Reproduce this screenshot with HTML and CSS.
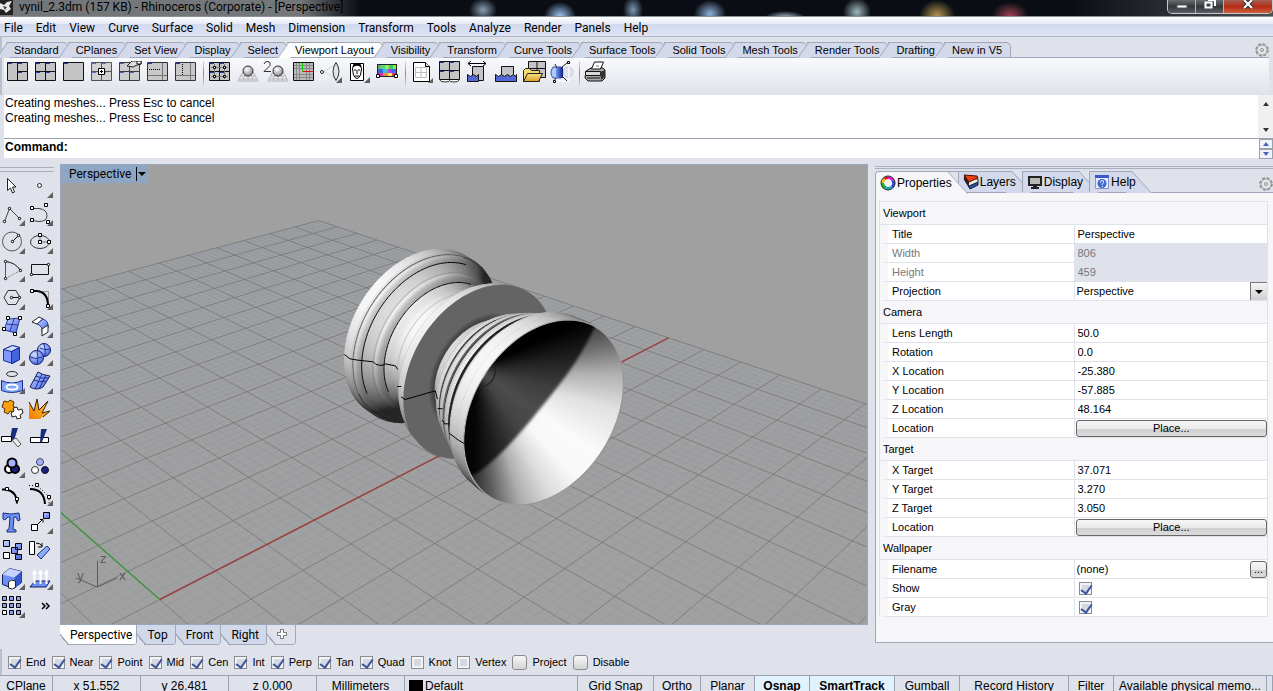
FILE: index.html
```html
<!DOCTYPE html>
<html lang="en">
<head>
    <meta charset="UTF-8">
    <meta name="viewport" content="width=device-width, initial-scale=1.0">
    <title>vynil_2.3dm (157 KB) - Rhinoceros (Corporate) - [Perspective]</title>
    <link rel="stylesheet" href="styles.css">
</head>
<body>

<!-- shared icon parts -->
<svg class="defs" aria-hidden="true">
    <defs>
        <linearGradient id="blue" x1="0" y1="0" x2="1" y2="1">
            <stop offset="0" stop-color="#c4d2ff"/><stop offset="1" stop-color="#4a68e8"/>
        </linearGradient>
        <linearGradient id="gold" x1="0" y1="0" x2="0" y2="1">
            <stop offset="0" stop-color="#f8e08a"/><stop offset="1" stop-color="#dca020"/>
        </linearGradient>
        <linearGradient id="fire" x1="1" y1="0" x2="0" y2="1">
            <stop offset="0" stop-color="#ffd23c"/><stop offset="1" stop-color="#f07800"/>
        </linearGradient>
        <linearGradient id="tube" x1="0" y1="0" x2="1" y2="0">
            <stop offset="0" stop-color="#6f9cf0"/><stop offset="1" stop-color="#0c1c80"/>
        </linearGradient>
        <radialGradient id="ball" cx=".38" cy=".32" r=".7">
            <stop offset="0" stop-color="#fff"/><stop offset="1" stop-color="#8a8a8a"/>
        </radialGradient>
        <radialGradient id="blueball" cx=".35" cy=".3" r=".8">
            <stop offset="0" stop-color="#d4e0ff"/><stop offset="1" stop-color="#3c5ce0"/>
        </radialGradient>
        <symbol id="fly" viewBox="0 0 28 28"><path d="M25 20v6h-6z" fill="#606060"/></symbol>
        <symbol id="pane4" viewBox="0 0 28 22">
            <path d="M3.500 1.500h20v18h-20z" fill="#c4c4c4" stroke="#111"/>
            <path d="M13.500 2v17M4 10.500h19" stroke="#111"/>
            <path d="M4 2.500h4M14 2.500h4M4 11.500h4M14 11.500h4" stroke="#2438a8"/>
        </symbol>
        <symbol id="plane" viewBox="0 0 28 22">
            <path d="M8 12h12l4 8H4zM5 18h18M6 15h16M11 12l-2 8M17 12l2 8M14 12v8" fill="none" stroke="#b4b6bc"/>
            <circle cx="14" cy="10" r="5" fill="url(#ball)" stroke="#333"/>
        </symbol>
        <symbol id="gear" viewBox="0 0 14 14">
            <circle cx="7" cy="7" r="6" fill="none" stroke="#8a8a8a" stroke-width="1.500" stroke-dasharray="3 1.700"/>
            <circle cx="7" cy="7" r="5" fill="#e4e6ea" stroke="#a0a0a0"/>
            <circle cx="7" cy="7" r="1.500" fill="none" stroke="#909090"/>
        </symbol>
    </defs>
</svg>

<header class="titlebar">
    <svg class="app-icon" width="13" height="15" viewBox="0 0 13 15"><path d="M0 0h13v15H0z" fill="#222"/><path d="M0 3l4 2 3-3 5-1-3 5 2 3-5 4-2-3-4-1z" fill="#e8e8e8"/><path d="M3 6l4 1-2 3z" fill="#444"/></svg>
    <span class="title">vynil_2.3dm (157 KB) - Rhinoceros (Corporate) - [Perspective]</span>
    <div class="window-buttons">
        <button aria-label="Minimize"><svg width="12" height="14"><path d="M1 5h10v3H1z" fill="#fff" stroke="#555"/></svg></button>
        <button aria-label="Restore"><svg width="12" height="14"><path d="M4 0h7v6M1.500 2.500h6v5h-6z" fill="none" stroke="#fff" stroke-width="2"/></svg></button>
        <button class="close" aria-label="Close"><svg width="12" height="14"><path d="M2 0l8 8M10 0L2 8" stroke="#333" stroke-width="4"/><path d="M2 0l8 8M10 0L2 8" stroke="#fff" stroke-width="2"/></svg></button>
    </div>
</header>

<nav class="menubar">
    <a href="#">File</a>
    <a href="#">Edit</a>
    <a href="#">View</a>
    <a href="#">Curve</a>
    <a href="#">Surface</a>
    <a href="#">Solid</a>
    <a href="#">Mesh</a>
    <a href="#">Dimension</a>
    <a href="#">Transform</a>
    <a href="#">Tools</a>
    <a href="#">Analyze</a>
    <a href="#">Render</a>
    <a href="#">Panels</a>
    <a href="#">Help</a>
</nav>

<div class="ribbon">
    <div class="ribbon-tabs">
        <button>Standard</button>
        <button>CPlanes</button>
        <button>Set View</button>
        <button>Display</button>
        <button>Select</button>
        <button class="active">Viewport Layout</button>
        <button>Visibility</button>
        <button>Transform</button>
        <button>Curve Tools</button>
        <button>Surface Tools</button>
        <button>Solid Tools</button>
        <button>Mesh Tools</button>
        <button>Render Tools</button>
        <button>Drafting</button>
        <button>New in V5</button>
        <svg class="gear" width="14" height="14"><use href="#gear"/></svg>
    </div>
    <div class="toolbar">
        <button aria-label="3 viewports"><svg viewBox="0 0 28 22"><path d="M3.500 1.500h20v18h-20z" fill="#c4c4c4" stroke="#111"/><path d="M13.500 2v17M14 10.500h9" stroke="#111"/><path d="M4 2.500h4M14 2.500h4M14 11.500h4" stroke="#2438a8"/></svg></button>
        <button aria-label="4 viewports"><svg viewBox="0 0 28 22"><use href="#pane4"/></svg></button>
        <button aria-label="Maximize viewport"><svg viewBox="0 0 28 22"><path d="M3.500 1.500h20v18h-20z" fill="#c4c4c4" stroke="#111"/><path d="M4 2.500h4" stroke="#2438a8"/></svg></button>
        <button aria-label="New viewport"><svg viewBox="0 0 28 22"><use href="#pane4" opacity=".7"/><path d="M10.500 7.500h6v6h-6z" fill="#fff" stroke="#000"/><path d="M12 10h3v1h-3zM13 9h1v3h-1z"/></svg></button>
        <button aria-label="Viewport properties"><svg viewBox="0 0 28 22"><use href="#pane4" opacity=".8"/><path d="M11 5l5-5h9v3l-4 1-4 2z" fill="#ddd" stroke="#222"/><path d="M21 0h4v3h-4z" fill="#fff" stroke="#111"/></svg></button>
        <button aria-label="Split horizontal"><svg viewBox="0 0 28 22"><path d="M3.500 1.500h20v18h-20z" fill="#c8c8c8" stroke="#333"/><path d="M18.500 2v17M4 14.500h19" stroke="#777"/><path d="M5 8.500h12" stroke="#000" stroke-dasharray="1 1"/><path d="M4 2.500h4" stroke="#2438a8"/></svg></button>
        <button aria-label="Split vertical"><svg viewBox="0 0 28 22"><path d="M3.500 1.500h20v18h-20z" fill="#c8c8c8" stroke="#333"/><path d="M18.500 2v17M4 14.500h19" stroke="#777"/><path d="M10.500 3v11" stroke="#000" stroke-dasharray="1 1"/><path d="M4 2.500h4" stroke="#2438a8"/></svg></button>
        <span class="sep"></span>
        <button aria-label="Synchronize views"><svg viewBox="0 0 28 22"><use href="#pane4"/><path d="M8.500 3v15M18.500 3v15M5 6.500h17M5 15.500h17" stroke="#777"/><path d="M7.500 5.500h2v2h-2zM17.500 5.500h2v2h-2zM7.500 14.500h2v2h-2zM17.500 14.500h2v2h-2z" fill="#eee" stroke="#000"/></svg></button>
        <button aria-label="Set CPlane"><svg viewBox="0 0 28 22"><use href="#plane"/></svg></button>
        <button aria-label="Two CPlanes"><svg viewBox="0 0 28 22"><use href="#plane" x="2"/><path d="M2 3q1-3 4-2.500t2 4L2 10.500h7" fill="none" stroke="#333"/></svg></button>
        <button aria-label="Grid"><svg viewBox="0 0 28 22"><path d="M3.500 1.500h20v18h-20z" fill="#bcbcbc" stroke="#111"/><path d="M6.500 2v17M9.500 2v17M16.500 2v17M19.500 2v17M4 4.500h19M4 7.500h19M4 13.500h19M4 16.500h19" stroke="#888"/><path d="M12.500 2v8" stroke="#0c0"/><path d="M12.500 10.500h11" stroke="#e01010"/></svg></button>
        <button aria-label="Lens"><svg viewBox="0 0 28 22"><path d="M6 10.500L18 3M6 10.500L18 18" stroke="#d8d8dc"/><circle cx="4" cy="11" r="1.500" fill="#fff" stroke="#222"/><path d="M18 1.500q-6 9 0 18q6-9 0-18z" fill="#dde4ea" stroke="#333"/><path d="M24 16v6h-6z" fill="#606060"/></svg></button>
        <button aria-label="Named view"><svg viewBox="0 0 28 22"><path d="M4.500 2.500h13v17h-13z" fill="#fff" stroke="#000"/><path d="M6.500 8q0-4 4.500-4t4.500 4l-1 6q-3.500 7-7 0z" fill="#fff" stroke="#000"/><path d="M7 6q4-4 8 0l-1-3H8zM8 9h2M12 9h2M11 9v4M9 15h4" stroke="#000"/><path d="M24 16v6h-6z" fill="#606060"/></svg></button>
        <button aria-label="Background bitmap"><svg viewBox="0 0 28 22"><path d="M3 3h20v13H3z" fill="#222"/><path d="M4 4h3v4H4z" fill="#7a6"/><path d="M7 4h4v4H7z" fill="#4d8"/><path d="M11 4h4v4h-4z" fill="#9e5"/><path d="M15 4h4v4h-4z" fill="#3c6"/><path d="M19 4h3v4h-3z" fill="#8e4"/><path d="M4 8h5v4H4z" fill="#36d"/><path d="M9 8h5v4H9z" fill="#4bd"/><path d="M14 8h4v4h-4z" fill="#a4d"/><path d="M18 8h4v4h-4z" fill="#46e"/><path d="M4 12h5v3H4z" fill="#d3a"/><path d="M9 12h5v3H9z" fill="#e84"/><path d="M14 12h4v3h-4z" fill="#ee5"/><path d="M18 12h4v3h-4z" fill="#e36"/><path d="M2.500 13.500h3v3h-3zM20.500 13.500h3v3h-3z" fill="#fff" stroke="#000"/></svg></button>
        <span class="sep"></span>
        <button aria-label="New layout"><svg viewBox="0 0 28 22"><path d="M5.500 1.500h12l4 4v15h-16z" fill="#fff" stroke="#000"/><path d="M17.500 1.500v4h4" fill="#ddd" stroke="#000"/><path d="M7.500 6.500h11v10h-11zM13 6v11M7 11.500h12" fill="none" stroke="#bbb"/><path d="M25 17v5h-5z" fill="#606060"/></svg></button>
        <button aria-label="Four view layout"><svg viewBox="0 0 28 22"><ellipse cx="9" cy="19" rx="5" ry="2" fill="#fff" stroke="#333"/><ellipse cx="18" cy="19" rx="5" ry="2" fill="#fff" stroke="#333"/><use href="#pane4" y="-1"/></svg></button>
        <button aria-label="Detail width"><svg viewBox="0 0 28 22"><path d="M4 2.500h18M7 0L4 2.500 7 5M19 0l3 2.500L19 5" stroke="#000" fill="none"/><path d="M8.500 5.500h11v14h-11z" fill="#c4c4c4" stroke="#111"/><path d="M3.500 20.500v-7l3 2 3-2 3 2 2-2v7z" fill="#5468d8" stroke="#111"/></svg></button>
        <button aria-label="Detail lock"><svg viewBox="0 0 28 22"><path d="M9.500 5.500h12v12h-12z" fill="#c4c4c4" stroke="#111"/><path d="M3.500 20.500v-7l3 2 3-2 3 2 3-2 3 2 3-2 2 2 1-2v7z" fill="#5468d8" stroke="#111"/></svg></button>
        <button aria-label="Open layout"><svg viewBox="0 0 28 22"><path d="M8.500 .5h17v16h-17z" fill="#c4c4c4" stroke="#111"/><path d="M17 1v15M9 7.500h16" stroke="#111"/><path d="M3.500 20.500v-11l2-2h4l2 2h8v11z" fill="#f4d870" stroke="#222"/><path d="M3.500 20.500l4-8h15l-4 8z" fill="url(#gold)" stroke="#222"/></svg></button>
        <button aria-label="Clipping plane"><svg viewBox="0 0 28 22"><circle cx="20" cy="11" r="5" fill="#dde2ee" stroke="#c4c8d4"/><path d="M9 2h12v18H9z" fill="none" stroke="#fff"/><path d="M5 6h8v11H5q-4-5 0-11z" fill="#a8ccff" stroke="#3850a0"/><path d="M8 6h7v11H8z" fill="url(#tube)"/><path d="M14 6l5-4M14 15l5 5M7 3l2 4M8 17l-2 3" stroke="#222"/><path d="M19.500 .5h2v2h-2zM5.500 19.500h2v2h-2z" fill="#fff" stroke="#000"/></svg></button>
        <span class="sep"></span>
        <button aria-label="Print"><svg viewBox="0 0 28 22"><path d="M4 10l5-3h12l2 2v8l-3 3H6l-3-3z" fill="#aaa" stroke="#111"/><path d="M9.500 8l3-7h9l-3 7z" fill="#fff" stroke="#111"/><path d="M3.500 10.500h15v4h-15zM5 17h13" fill="#d8d8d8" stroke="#111"/><path d="M18 11l5-2v7l-4 3z" fill="#333"/><path d="M14 5h3" stroke="#777"/></svg></button>
    </div>
</div>

<section class="command">
    <div class="history">
        <div class="history-text">Creating meshes... Press Esc to cancel<br>Creating meshes... Press Esc to cancel</div>
        <div class="scrollbar"><i class="up"></i><i class="down"></i></div>
    </div>
    <div class="prompt">
        <label for="cmd">Command:</label>
        <input id="cmd" type="text" autocomplete="off">
        <div class="spin"><button aria-label="Previous"><i class="up"></i></button><button aria-label="Next"><i class="down"></i></button></div>
    </div>
</section>

<main class="workspace">
    <aside class="tools">
        <button aria-label="Select"><svg viewBox="0 0 28 28"><path d="M7.500 6.500v12l3-2.500 2 5 2-1-2-5h3.500z" fill="#fff" stroke="#222"/></svg></button>
        <button aria-label="Point"><svg viewBox="0 0 28 28"><circle cx="11.500" cy="13.500" r="2" fill="#fff" stroke="#222"/><use href="#fly"/></svg></button>

        <button aria-label="Polyline"><svg viewBox="0 0 28 28"><path d="M4.500 21.500l5-13 10 10" fill="none" stroke="#444"/><g fill="#fff" stroke="#000"><circle cx="4.500" cy="21.500" r="1.200"/><circle cx="9.500" cy="8.500" r="1.200"/><circle cx="19.500" cy="18.500" r="1.200"/></g><use href="#fly"/></svg></button>
        <button aria-label="Curve"><svg viewBox="0 0 28 28"><path d="M4 8.500h7q8 1 8 7t-8 6q-4 0-7-2" fill="none" stroke="#444"/><path d="M2.500 6.500h3v3h-3zM16.500 3.500h3v3h-3zM2.500 18.500h3v3h-3zM18.500 20.500h3v3h-3z" fill="#fff" stroke="#000"/><use href="#fly"/></svg></button>

        <button aria-label="Circle"><svg viewBox="0 0 28 28"><circle cx="12" cy="13.500" r="9.500" fill="none" stroke="#555"/><path d="M12.500 13.500l6-6" stroke="#000"/><g fill="#fff" stroke="#000"><circle cx="12.500" cy="13.500" r="1.200"/><circle cx="18.500" cy="7.500" r="1.200"/></g><use href="#fly"/></svg></button>
        <button aria-label="Ellipse"><svg viewBox="0 0 28 28"><ellipse cx="12" cy="14" rx="9.500" ry="6.500" fill="none" stroke="#333"/><path d="M12 7v7h9" fill="none" stroke="#777"/><path d="M10.500 5.500h3v3h-3zM10.500 12.500h3v3h-3zM19.500 12.500h3v3h-3z" fill="#fff" stroke="#000"/><use href="#fly"/></svg></button>

        <button aria-label="Arc"><svg viewBox="0 0 28 28"><path d="M5.500 22V5.500" stroke="#555"/><path d="M5.500 22.500l15-8" stroke="#888" stroke-dasharray="2 1"/><path d="M5.500 5.500q10 1 15 9" fill="none" stroke="#111"/><g fill="#fff" stroke="#000"><circle cx="5.500" cy="5.500" r="1.200"/><circle cx="20.500" cy="14.500" r="1.200"/><circle cx="5.500" cy="22.500" r="1.200"/></g><use href="#fly"/></svg></button>
        <button aria-label="Rectangle"><svg viewBox="0 0 28 28"><path d="M3.500 8.500h17v10h-17z" fill="none" stroke="#111"/><g fill="#fff" stroke="#000"><circle cx="20.500" cy="8.500" r="1.200"/><circle cx="3.500" cy="18.500" r="1.200"/></g><use href="#fly"/></svg></button>

        <button aria-label="Polygon"><svg viewBox="0 0 28 28"><path d="M8 6.500h8l4 7-4 7H8l-4-7z" fill="none" stroke="#333"/><path d="M11.500 13.500h8" stroke="#000"/><g fill="#fff" stroke="#000"><circle cx="11.500" cy="13.500" r="1.200"/><circle cx="19.500" cy="13.500" r="1.200"/></g><use href="#fly"/></svg></button>
        <button aria-label="Fillet"><svg viewBox="0 0 28 28"><path d="M4 7.500h16.500v15" fill="none" stroke="#999"/><path d="M4 7h5q11 1 11 15" fill="none" stroke="#000" stroke-width="2"/><path d="M2.500 5.500h3v3h-3zM18.500 20.500h3v3h-3z" fill="#fff" stroke="#000"/><use href="#fly"/></svg></button>

        <button aria-label="Surface from points"><svg viewBox="0 0 28 28"><path d="M8 7l12-1-4 15-12-3z" fill="url(#blue)" stroke="#2438a0"/><path d="M6 12l12 1M14 7l-4 12" stroke="#2438a0"/><path d="M6.500 4.500h3v3h-3zM18.500 4.500h3v3h-3zM2.500 15.500h3v3h-3zM13.500 20.500h3v3h-3z" fill="#fff" stroke="#000"/><use href="#fly"/></svg></button>
        <button aria-label="Blend surface"><svg viewBox="0 0 28 28"><path d="M4 10l7-5 4 2-6 5z" fill="#fff" stroke="#222"/><path d="M9 12l6-5q6 2 5 9l-6 4q1-6-5-8z" fill="url(#blue)" stroke="#2438a0"/><path d="M14 17l6-4v7l-6 4z" fill="#fff" stroke="#222"/><use href="#fly"/></svg></button>

        <button aria-label="Box"><svg viewBox="0 0 28 28"><path d="M3.500 9.500l9-4 7 2v12l-7 4-9-3z" fill="#7f98ff" stroke="#1c2c90"/><path d="M3.500 9.500l9-4 7 2-8 4z" fill="#d0dcff" stroke="#1c2c90"/><path d="M11.500 11.500l8-4v12l-8 4z" fill="#4664e0" stroke="#1c2c90"/><use href="#fly"/></svg></button>
        <button aria-label="Boolean union"><svg viewBox="0 0 28 28"><circle cx="16" cy="10" r="6.500" fill="url(#blueball)" stroke="#101c60"/><circle cx="8.500" cy="17.500" r="7" fill="url(#blueball)" stroke="#101c60"/><path d="M2 17q6 3 12 0M9 11q2 6 0 13M16 4q2 6 1 12M12 8q5 3 10 1" fill="none" stroke="#2438a0"/><use href="#fly"/></svg></button>

        <button aria-label="Project curve"><svg viewBox="0 0 28 28"><ellipse cx="12" cy="6" rx="5.500" ry="2.500" fill="none" stroke="#333"/><path d="M1.500 12.500q10 5 21 0v10q-11 4-21 0z" fill="#7fa4f8" stroke="#1c2c90"/><ellipse cx="12" cy="19" rx="5.500" ry="2.500" fill="#7fa4f8" stroke="#fff" stroke-width="2"/><use href="#fly"/></svg></button>
        <button aria-label="Mesh"><svg viewBox="0 0 28 28"><path d="M10 4q4 3 12 4l-7 11q-6 4-13 0z" fill="url(#blue)" stroke="#101c60"/><path d="M6 12q5 3 12 1M14 6L7 21M18 7l-7 14M8 8q5 3 12 2" fill="none" stroke="#1c2c90"/><use href="#fly"/></svg></button>

        <button aria-label="Join"><svg viewBox="0 0 28 28"><path d="M4 5l4 1 2-2 4 2-1 4 3 2-2 4-4-1-2 3-4-2 1-3-3-2z" fill="#f8a010" stroke="#503000"/><path d="M13 12l4-1 1 3 4-1 1 4-3 2 1 3-4 1-1-3-4 1-1-4 3-2z" fill="#fff" stroke="#222"/></svg></button>
        <button aria-label="Explode"><svg viewBox="0 0 28 28"><path d="M1 6l5 9 3-12 2 11 9-9-6 12 8-2-10 8H1z" fill="url(#fire)"/><path d="M1 6l5 9 3-12 2 11 9-9-6 12 8-2-7 6" fill="none" stroke="#402000"/></svg></button>

        <button aria-label="Trim"><svg viewBox="0 0 28 28"><path d="M12 4h6l-4 12h-4z" fill="#182c80"/><path d="M1.500 12.500h10v5h-10z" fill="#fff" stroke="#000"/><path d="M12 16l4-2 5 6-3 3z" fill="#eee" stroke="#555"/></svg></button>
        <button aria-label="Split"><svg viewBox="0 0 28 28"><path d="M2.500 13.500h18v5h-18z" fill="#fff" stroke="#000"/><path d="M13 5h6l-5 13h-2z" fill="#182c80"/></svg></button>

        <button aria-label="Group"><svg viewBox="0 0 28 28"><g stroke="#000" stroke-width="2"><circle cx="9" cy="17" r="4" fill="#fff"/><circle cx="15" cy="17" r="4" fill="#182080"/><circle cx="12" cy="11" r="4.500" fill="#a8b0ff"/></g><use href="#fly"/></svg></button>
        <button aria-label="Ungroup"><svg viewBox="0 0 28 28"><circle cx="12" cy="10" r="3.500" fill="#a8b0ff" stroke="#445"/><circle cx="7" cy="18" r="3.500" fill="#fff" stroke="#333"/><circle cx="17" cy="18" r="3.500" fill="#182080" stroke="#112"/></svg></button>

        <button aria-label="Edit points"><svg viewBox="0 0 28 28"><path d="M2 9.500h4q11 2 11 14" fill="none" stroke="#000" stroke-width="2"/><path d="M5.500 7.500h3v3h-3zM15.500 17.500h3v3h-3z" fill="#fff" stroke="#000"/></svg></button>
        <button aria-label="Control points"><svg viewBox="0 0 28 28"><path d="M2 9q14 0 15 15" fill="none" stroke="#000" stroke-width="2"/><path d="M1 5.500h8l12 11v7" fill="none" stroke="#000" stroke-dasharray="1 2"/><path d="M7.500 3.500h3v3h-3zM19.500 15.500h3v3h-3z" fill="#fff" stroke="#000"/><use href="#fly"/></svg></button>

        <button aria-label="Text"><svg viewBox="0 0 28 28"><path d="M3 5q8 2 16 0l1 7-2 1-2-4h-2l-1 12 3 1v2H7v-2l2-1 1-12H8l-3 3-2-1z" fill="#6c90f4" stroke="#1c2c80"/></svg></button>
        <button aria-label="Move"><svg viewBox="0 0 28 28"><path d="M15.500 4.500h6v6h-6z" fill="url(#blue)" stroke="#000"/><path d="M3.500 16.500h6v6h-6z" fill="#fff" stroke="#000"/><path d="M9 17l6-6M12 11.500h3v3" fill="none" stroke="#000"/><use href="#fly"/></svg></button>

        <button aria-label="Copy"><svg viewBox="0 0 28 28"><g stroke="#000"><path d="M3.500 4.500h6v6h-6zM15.500 7.500h6v6h-6zM11.500 11.500h6v6h-6zM15.500 18.500h6v5h-6z" fill="url(#blue)"/><path d="M3.500 16.500h6v6h-6z" fill="#fff"/></g></svg></button>
        <button aria-label="Rotate"><svg viewBox="0 0 28 28"><path d="M1.500 5.500h5v13h-5z" fill="#fff" stroke="#000"/><path d="M9 19l10-9 3 3-9 10z" fill="#8cacf8" stroke="#1c2c80"/><path d="M8 7q4 0 6 3M14 7v4h-4" fill="none" stroke="#000"/></svg></button>

        <button aria-label="Extrude solid"><svg viewBox="0 0 28 28"><path d="M2.500 10.500l7-6 12 3v11l-8 6-11-4z" fill="#6c90f4" stroke="#101c60"/><path d="M2.500 10.500l7-6 12 3-7 6z" fill="#c4d4ff"/><path d="M14.500 13.500l7-6v11l-7 6z" fill="#3858c8"/><path d="M8.500 24v-6l3-2 4 1v6l-3 2z" fill="#fff" stroke="#222"/><use href="#fly"/></svg></button>
        <button aria-label="Project to plane"><svg viewBox="0 0 28 28"><path d="M7 17h15l-4 6H2z" fill="#6c90f4" stroke="#101c60"/><path d="M6.500 20V9M12.500 20V9M18.500 20V9" stroke="#fff" stroke-width="2"/><path d="M4 10l2.500-5 2.500 5zM10 10l2.500-5 2.500 5zM16 10l2.500-5 2.500 5z" fill="#fff"/><use href="#fly"/></svg></button>

        <button aria-label="Array"><svg viewBox="0 0 28 28"><path d="M2.500 4.500h4v4h-4zM9.500 4.500h4v4h-4zM16.500 4.500h4v4h-4zM2.500 11.500h4v4h-4zM9.500 11.500h4v4h-4zM16.500 11.500h4v4h-4zM9.500 18.500h4v4h-4zM16.500 18.500h4v4h-4z" fill="#8ca0f4" stroke="#000"/><path d="M2.500 18.500h4v4h-4z" fill="#fff" stroke="#000"/><use href="#fly"/></svg></button>
        <button aria-label="More"><svg viewBox="0 0 28 28"><path d="M14 11l3 3-3 3M18 11l3 3-3 3" fill="none" stroke="#000" stroke-width="1.500"/></svg></button>
    </aside>

    <section class="view">
        <div class="viewport" id="viewport">
            <canvas id="scene"></canvas>
            <button class="view-title"><span>Perspective</span><i class="down"></i></button>
        </div>
        <div class="view-tabs">
            <button class="active">Perspective</button>
            <button>Top</button>
            <button>Front</button>
            <button>Right</button>
            <button class="add" aria-label="New viewport"><svg width="10" height="10"><path d="M3.500 .5h3v3h3v3h-3v3h-3v-3h-3v-3h3z" fill="#fff" stroke="#777"/></svg></button>
        </div>
    </section>

    <aside class="panel">
        <div class="panel-tabs">
            <button class="active"><svg width="16" height="16"><g fill="none" stroke-width="3"><path d="M8 2.500a5.500 5.500 0 0 1 5 3" stroke="#e020c0"/><path d="M13 5.500a5.500 5.500 0 0 1-1 6.500" stroke="#3040e0"/><path d="M12 12a5.500 5.500 0 0 1-6 1" stroke="#10a0c0"/><path d="M6 13a5.500 5.500 0 0 1-3.500-5" stroke="#20b030"/><path d="M2.500 8a5.500 5.500 0 0 1 2-4" stroke="#f0c010"/><path d="M4.500 4a5.500 5.500 0 0 1 3.500-1.500" stroke="#e02010"/></g><circle cx="8" cy="8" r="7" fill="none" stroke="#333"/></svg>Properties</button>
            <button><svg width="16" height="16"><path d="M1 5l6 10 8-4V8z" fill="#28509c" stroke="#101c50"/><path d="M1 3l5 9 9-4V5z" fill="#eee" stroke="#222"/><path d="M1 1l5 7 9-4-1-2z" fill="#e84010" stroke="#501000"/><path d="M1 1l5 7v4L1 5z" fill="#401810"/></svg>Layers</button>
            <button><svg width="16" height="16"><path d="M1 2h14v10H1z" fill="#222"/><path d="M3 4h10v6H3z" fill="#b8b8b8"/><path d="M6 12h4v1h2v2H4v-2h2z" fill="#222"/></svg>Display</button>
            <button><svg width="16" height="16"><path d="M1.500 1.500h13v13h-13z" fill="#e8ecff" stroke="#8898c0"/><path d="M1 1h14v3H1z" fill="#3c58c8"/><circle cx="8" cy="9.500" r="4.500" fill="#3c68d8"/><path d="M6.500 8.500q0-2 1.700-2t1.500 2l-1.500 1.500v1M8.200 12v1" fill="none" stroke="#fff"/></svg>Help</button>
            <svg class="gear" width="14" height="14"><use href="#gear"/></svg>
        </div>
        <div class="panel-body">
            <table class="props">
                <tbody>
                    <tr class="group"><th colspan="2">Viewport</th></tr>
                    <tr><th><label for="title">Title</label></th><td><input id="title" type="text" value="Perspective"></td></tr>
                    <tr class="off"><th><label for="width">Width</label></th><td><input id="width" type="text" value="806" disabled></td></tr>
                    <tr class="off"><th><label for="height">Height</label></th><td><input id="height" type="text" value="459" disabled></td></tr>
                    <tr><th><label for="projection">Projection</label></th><td><div class="pick"><select id="projection"><option>Perspective</option><option>Parallel</option></select><i class="down"></i></div></td></tr>
                    <tr class="group"><th colspan="2">Camera</th></tr>
                    <tr><th><label for="lens">Lens Length</label></th><td><input id="lens" type="text" value="50.0"></td></tr>
                    <tr><th><label for="rotation">Rotation</label></th><td><input id="rotation" type="text" value="0.0"></td></tr>
                    <tr><th><label for="xloc">X Location</label></th><td><input id="xloc" type="text" value="-25.380"></td></tr>
                    <tr><th><label for="yloc">Y Location</label></th><td><input id="yloc" type="text" value="-57.885"></td></tr>
                    <tr><th><label for="zloc">Z Location</label></th><td><input id="zloc" type="text" value="48.164"></td></tr>
                    <tr><th><label for="placeCam">Location</label></th><td><button class="place" id="placeCam">Place...</button></td></tr>
                    <tr class="group"><th colspan="2">Target</th></tr>
                    <tr><th><label for="xtar">X Target</label></th><td><input id="xtar" type="text" value="37.071"></td></tr>
                    <tr><th><label for="ytar">Y Target</label></th><td><input id="ytar" type="text" value="3.270"></td></tr>
                    <tr><th><label for="ztar">Z Target</label></th><td><input id="ztar" type="text" value="3.050"></td></tr>
                    <tr><th><label for="placeTar">Location</label></th><td><button class="place" id="placeTar">Place...</button></td></tr>
                    <tr class="group"><th colspan="2">Wallpaper</th></tr>
                    <tr><th><label for="file">Filename</label></th><td><div class="file"><span>(none)</span><button class="browse" id="file">...</button></div></td></tr>
                    <tr><th><label for="show">Show</label></th><td><input id="show" type="checkbox" checked></td></tr>
                    <tr><th><label for="gray">Gray</label></th><td><input id="gray" type="checkbox" checked></td></tr>
                </tbody>
            </table>
        </div>
    </aside>
</main>

<div class="osnap">
    <label><input type="checkbox" checked>End</label>
    <label><input type="checkbox" checked>Near</label>
    <label><input type="checkbox" checked>Point</label>
    <label><input type="checkbox" checked>Mid</label>
    <label><input type="checkbox" checked>Cen</label>
    <label><input type="checkbox" checked>Int</label>
    <label><input type="checkbox" checked>Perp</label>
    <label><input type="checkbox" checked>Tan</label>
    <label><input type="checkbox" checked>Quad</label>
    <label><input type="checkbox">Knot</label>
    <label><input type="checkbox">Vertex</label>
    <label><input type="checkbox" class="push">Project</label>
    <label><input type="checkbox" class="push">Disable</label>
</div>

<footer class="status">
    <button>CPlane</button>
    <span>x 51.552</span>
    <span>y 26.481</span>
    <span>z 0.000</span>
    <span>Millimeters</span>
    <button class="layer"><i></i>Default</button>
    <button>Grid Snap</button>
    <button>Ortho</button>
    <button>Planar</button>
    <button class="on">Osnap</button>
    <button class="on">SmartTrack</button>
    <button>Gumball</button>
    <button>Record History</button>
    <button>Filter</button>
    <span class="memory">Available physical memo...</span>
    <span></span>
</footer>

<script src="scene.js"></script>
</body>
</html>
```
FILE: styles.css
```css
* {
    box-sizing: border-box;
}

body {
    margin: 0;
    min-height: 100vh;
    display: flex;
    flex-direction: column;
    overflow: hidden;
    background-color: #dfe2ea;
    color: #000;
    font-family: "Liberation Sans", Arial, sans-serif;
    font-size: 11px;
}

button, input, select {
    font: inherit;
    color: inherit;
    margin: 0;
    padding: 0;
    border: 0;
    background: none;
}

a {
    color: inherit;
    text-decoration: none;
}

.defs {
    position: absolute;
    width: 0;
    height: 0;
}

.up, .down {
    display: block;
    width: 0;
    border: 3px solid transparent;
}
.up {
    border-top-width: 0;
    border-bottom: 4px solid #333;
}
.down {
    border-bottom-width: 0;
    border-top: 4px solid #333;
}

/* title bar */
.titlebar {
    display: flex;
    align-items: flex-start;
    height: 17px;
    overflow: hidden;
    border-bottom: 1px solid #8a8f96;
    background:
        linear-gradient(90deg, #74777a 0, #74777a 300px, rgba(60, 64, 70, 0.6) 340px, transparent 360px),
        radial-gradient(14px 12px at 483px 10px, #8a9cb0, transparent),
        radial-gradient(16px 14px at 560px 16px, #9cc4f4, transparent),
        radial-gradient(10px 14px at 633px 10px, #7c96b4, transparent),
        radial-gradient(16px 14px at 710px 14px, #8eb0dc, transparent),
        radial-gradient(20px 6px at 785px 17px, #a0b8d0, transparent),
        radial-gradient(14px 14px at 857px 12px, #a0b8bc, transparent),
        radial-gradient(18px 16px at 937px 16px, #b89850, transparent),
        radial-gradient(18px 14px at 1010px 16px, #a04458, transparent),
        linear-gradient(90deg, #0a0e14 84%, #4a4e52);
}
.app-icon {
    flex: none;
}
.title {
    flex: 1;
    padding-left: 6px;
    font-family: Roboto, "Open Sans", sans-serif;
    font-size: 12px;
    line-height: 15px;
}
.window-buttons {
    display: flex;
    height: 14px;
    border: 1px solid #c4c8cc;
    border-top: 0;
    border-radius: 0 0 5px 5px;
    overflow: hidden;
}
.window-buttons button {
    width: 28px;
    display: flex;
    justify-content: center;
    border-right: 1px solid #b0b4b8;
    background: linear-gradient(#6a6e72, #34383c 50%, #5c6064);
}
.window-buttons .close {
    width: 48px;
    border-right: 0;
    background: linear-gradient(#a86058, #b42c14 50%, #d06040);
}

/* menu */
.menubar {
    display: flex;
    gap: 13px;
    height: 20px;
    padding: 1px 4px 0;
    border-bottom: 1px solid #b0b6c8;
    background: linear-gradient(#fff, #e6eaf6 35%, #d2d9ee 40%, #e0e5f6);
    font-family: Roboto, "Open Sans", sans-serif;
    font-size: 12px;
    line-height: 20px;
}

/* toolbars */
.ribbon {
    padding: 5px 4px 0 2px;
    border-left: 2px solid #b8c0d0;
}
.ribbon-tabs {
    position: relative;
    display: flex;
    align-items: flex-end;
    height: 15px;
    padding-left: 2px;
}
.ribbon-tabs button {
    position: relative;
    height: 15px;
    padding: 0 8px;
    white-space: nowrap;
    line-height: 15px;
    border-top: 1px solid #a0a8b8;
    border-right: 1px solid #a0a8b8;
    border-radius: 0 5px 0 0;
    background-color: #d3d9ea;
    z-index: 0;
}
.ribbon-tabs button::before {
    content: "";
    position: absolute;
    z-index: -1;
    left: -4px;
    top: -1px;
    width: 12px;
    height: 15px;
    border-top: 1px solid #a0a8b8;
    border-left: 1px solid #a0a8b8;
    background-color: #d3d9ea;
    transform: skewX(-35deg);
}
.ribbon-tabs .active, .ribbon-tabs .active::before {
    background-color: #fdfdfe;
}
.ribbon-tabs .gear {
    margin-left: auto;
}
.toolbar {
    display: flex;
    height: 38px;
    padding-top: 3px;
    border-top: 1px solid #a0a8b8;
    background: linear-gradient(#f8f9fb, #dfe2ea);
}
.toolbar button {
    width: 28px;
    height: 22px;
}
.toolbar svg, .tools svg {
    display: block;
}
.toolbar .sep {
    width: 1px;
    height: 26px;
    margin: 0 2px 0 3px;
    background: linear-gradient(#e0e0e0, #888, #e0e0e0);
}

/* command area */
.command {
    border-left: 4px solid #dfe2ea;
    background-color: #fff;
}
.history {
    display: flex;
    height: 44px;
    border-bottom: 1px solid #9aa2b2;
}
.history-text {
    flex: 1;
    padding: 1px 0 0 1px;
    font-size: 12px;
    line-height: 15px;
}
.scrollbar {
    width: 15px;
    padding: 7px 0 6px;
    display: flex;
    flex-direction: column;
    align-items: center;
    justify-content: space-between;
    background-color: #f0f0f0;
}
.prompt {
    display: flex;
    height: 19px;
    font-size: 12px;
    line-height: 16px;
}
.prompt label {
    padding-left: 1px;
    font-weight: bold;
}
.prompt input {
    flex: 1;
    outline: 0;
}
.spin {
    width: 14px;
    display: flex;
    flex-direction: column;
}
.spin button {
    flex: 1;
    padding: 2px 3px;
    border: 1px solid #9aa2b2;
    background-color: #f0f2f8;
}
.spin .up {
    border-bottom-color: #4860b8;
}
.spin .down {
    border-top-color: #4860b8;
}

/* workspace */
.workspace {
    flex: 1;
    display: flex;
    padding-top: 6px;
}
.tools {
    display: grid;
    grid-template-columns: 28px 28px;
    grid-template-rows: 4px;
    grid-auto-rows: 28px;
    align-content: start;
    width: 60px;
    padding-top: 4px;
}
.tools::before {
    content: "";
    grid-column: 1 / 3;
    height: 3px;
    margin: -1px 2px 0 0;
    border-top: 1px solid #a8b0c0;
    border-bottom: 1px solid #a8b0c0;
}
.view {
    flex: 1;
    min-width: 0;
    display: flex;
    flex-direction: column;
}
.viewport {
    position: relative;
    flex: 1;
    min-height: 0;
    border: 1px solid #9aa6ba;
    background-color: #a0a0a0;
}
.viewport canvas {
    position: absolute;
    inset: 0;
    width: 100%;
    height: 100%;
}
.view-title {
    position: relative;
    display: flex;
    align-items: center;
    height: 18px;
    padding: 0 1px 0 8px;
    background-color: #8da6c4;
    font-family: Roboto, "Open Sans", sans-serif;
    font-size: 12px;
}
.view-title .down {
    margin-left: 7px;
    border-width: 4px 4px 0;
    border-top-color: #000;
}
.view-title::after {
    content: "";
    position: absolute;
    right: 10px;
    top: 2px;
    bottom: 2px;
    border-left: 1px solid #000;
}
.view-tabs {
    display: flex;
    height: 21px;
    font-family: Roboto, "Open Sans", sans-serif;
    font-size: 12px;
}
.view-tabs button {
    height: 20px;
    padding: 0 7px 0 10px;
    border-right: 1px solid #a0a8b8;
    border-radius: 0 0 4px 0;
    background:
        linear-gradient(#a0a8b8, #a0a8b8) 8px 100% / 100% 1px no-repeat,
        linear-gradient(50deg, transparent 6px, #a0a8b8 6px, #a0a8b8 7px, #d0d8ea 8px);
}
.view-tabs .active {
    padding-right: 4px;
    background:
        linear-gradient(#a0a8b8, #a0a8b8) 8px 100% / 100% 1px no-repeat,
        linear-gradient(50deg, transparent 6px, #a0a8b8 6px, #a0a8b8 7px, #fff 8px);
}
.view-tabs .add {
    padding: 0 8px 0 10px;
    background:
        linear-gradient(#a0a8b8, #a0a8b8) 8px 100% / 100% 1px no-repeat,
        linear-gradient(50deg, transparent 6px, #a0a8b8 6px, #a0a8b8 7px, #dfe2ea 8px);
}

/* properties panel */
.panel {
    display: flex;
    flex-direction: column;
    width: 398px;
    margin: 2px 0 3px 7px;
    padding-top: 1px;
    border-top: 1px solid #a8b0c0;
}
.panel-tabs {
    display: flex;
    align-items: flex-end;
    height: 25px;
    border-top: 1px solid #a8b0c0;
    border-bottom: 1px solid #a0a8b8;
    font-size: 12px;
}
.panel-tabs button {
    position: relative;
    z-index: 0;
    display: flex;
    align-items: center;
    gap: 1px;
    height: 21px;
    padding: 0 6px 0 4px;
    border-top: 1px solid #a0a8b8;
    border-left: 1px solid #a0a8b8;
    border-radius: 4px 0 0 0;
    background: linear-gradient(#d3d9ea, #d3d9ea) 0 0 / calc(100% - 12px) 100% no-repeat;
}
/* slanted right end, runs under the next tab */
.panel-tabs button::after {
    content: "";
    position: absolute;
    z-index: -1;
    top: -1px;
    right: 0;
    width: 24px;
    height: 21px;
    border-top: 1px solid #a0a8b8;
    border-right: 1px solid #a0a8b8;
    background-color: #d3d9ea;
    transform: skewX(42deg);
}
.panel-tabs .active {
    height: 22px;
    margin-bottom: -1px;
    z-index: 1;
    background-image: linear-gradient(#f6f6f9, #f6f6f9);
}
.panel-tabs .active::after {
    height: 22px;
    background-color: #f6f6f9;
}
.panel-tabs button:not(.active) {
    border-top-color: transparent;
    border-image: linear-gradient(90deg, #a0a8b8 calc(100% - 14px), transparent 0) 1;
}
.panel-tabs .gear {
    margin: 0 0 1px auto;
}
.panel-body {
    flex: 1;
    padding: 8px 5px 0 3px;
    border-left: 1px solid #a0a8b8;
    border-bottom: 1px solid #a0a8b8;
    background-color: #f6f6f9;
}
.props {
    width: 100%;
    table-layout: fixed;
    border-spacing: 0;
    border: 1px solid #dfe2ea;
    border-bottom: 0;
}
.props th, .props td {
    height: 19px;
    padding: 0;
    border-bottom: 1px solid #dfe2ea;
    text-align: left;
    font-weight: normal;
    background-color: #fff;
}
.props th {
    padding-left: 4px;
    border-left: 8px solid #f6f6f9;
}
.props .group th {
    height: 23px;
    padding-left: 3px;
    border-left: 0;
    background-color: #f6f6f9;
}
.props td {
    border-left: 1px solid #dfe2ea;
}
.props td input[type="text"] {
    display: block;
    width: 100%;
    height: 18px;
    padding-left: 3px;
}
.props td input[type="checkbox"] {
    display: block;
    margin-left: 4px;
}
.props .off {
    color: #777;
}
.props .off td {
    background-color: #dfe2ea;
}
.pick {
    position: relative;
}
.pick select {
    appearance: none;
    display: block;
    width: 100%;
    height: 18px;
    padding-left: 2px;
}
.pick .down {
    position: absolute;
    right: 0;
    top: 0;
    width: 17px;
    height: 18px;
    border: 1px solid #777;
    border-width: 1px 0 0 1px;
    background: linear-gradient(#f4f4f4, #d0d0d0);
    pointer-events: none;
}
.pick .down::after {
    content: "";
    display: block;
    margin: 7px 0 0 4px;
    width: 0;
    border: 4px solid transparent;
    border-top-color: #000;
    border-bottom: 0;
}
.place, .browse {
    display: block;
    height: 17px;
    border: 1px solid #666;
    border-radius: 3px;
    background: linear-gradient(#f6f6f6, #eaeaea 50%, #d0d0d0 55%, #dcdcdc);
    line-height: 15px;
}
.place {
    width: calc(100% - 1px);
    margin-left: 1px;
}
.file {
    display: flex;
    align-items: center;
    justify-content: space-between;
    padding-left: 2px;
}
.browse {
    width: 17px;
}

input[type="checkbox"] {
    appearance: none;
    flex: none;
    position: relative;
    width: 13px;
    height: 13px;
    border: 1px solid #8a8c90;
    background-color: #d4d8e0;
    box-shadow: inset 0 0 0 2px #f2f3f5;
}
input[type="checkbox"]:checked::before {
    content: "";
    position: absolute;
    left: 3px;
    top: 0;
    width: 5px;
    height: 9px;
    border: solid #40559c;
    border-width: 0 2px 2px 0;
    transform: rotate(35deg);
}
input[type="checkbox"].push {
    width: 15px;
    height: 15px;
    border-radius: 3px;
    background: linear-gradient(#f6f6f6, #d4d4d4);
    box-shadow: none;
}

/* osnap */
.osnap {
    display: flex;
    align-items: center;
    gap: 6px;
    height: 26px;
    margin-top: 3px;
    padding-left: 6px;
    border-left: 2px solid #b8c0d0;
}
.osnap label {
    display: flex;
    align-items: center;
    gap: 5px;
}

/* status bar */
.status {
    display: grid;
    grid-template-columns: 53px repeat(4, 88px) 1fr 76px 47px 54px 55px 85px 65px 109px 45px 153px 6px;
    height: 16px;
    overflow: hidden;
    border-top: 1px solid #9aa2b2;
    font-size: 12px;
    line-height: 20px;
    text-align: center;
}
.status > * {
    height: 20px;
    white-space: nowrap;
    overflow: hidden;
    border-right: 1px solid #9aa2b2;
}
.status .on {
    font-weight: bold;
    background-color: #e0f2fc;
}
.status .layer {
    display: flex;
    align-items: center;
    gap: 2px;
    padding-left: 4px;
}
.layer i {
    width: 14px;
    height: 12px;
    background-color: #000;
}
```
FILE: scene.js
```js
const viewport = document.getElementById("viewport");
const canvas = document.getElementById("scene");
const ctx = canvas.getContext("2d");

// camera, same numbers as in the properties panel
const eye = [-25.380, -57.885, 48.164];
const target = [37.071, 3.270, 3.050];
const lens = 50;

const dot = (a, b) => a[0] * b[0] + a[1] * b[1] + a[2] * b[2];
const sub = (a, b) => [a[0] - b[0], a[1] - b[1], a[2] - b[2]];
const unit = a => {
    const l = Math.hypot(a[0], a[1], a[2]);
    return [a[0] / l, a[1] / l, a[2] / l];
};

const forward = unit(sub(target, eye));
const right = unit([forward[1], -forward[0], 0]);
const up = [right[1] * forward[2], -right[0] * forward[2], right[0] * forward[1] - right[1] * forward[0]];

function segment(a, b, color, width) {
    const w = canvas.width, h = canvas.height;
    const f = (h / 2) / (12 / lens);
    let pa = sub(a, eye), pb = sub(b, eye);
    pa = [dot(pa, right), dot(pa, up), dot(pa, forward)];
    pb = [dot(pb, right), dot(pb, up), dot(pb, forward)];
    const near = 5;
    if (pa[2] < near && pb[2] < near) return;
    const cut = (p, q) => {
        const k = (near - p[2]) / (q[2] - p[2]);
        return [p[0] + (q[0] - p[0]) * k, p[1] + (q[1] - p[1]) * k, near];
    };
    if (pa[2] < near) pa = cut(pa, pb);
    if (pb[2] < near) pb = cut(pb, pa);
    ctx.strokeStyle = color;
    ctx.lineWidth = width;
    ctx.beginPath();
    ctx.moveTo(w / 2 + pa[0] / pa[2] * f, h / 2 - pa[1] / pa[2] * f);
    ctx.lineTo(w / 2 + pb[0] / pb[2] * f, h / 2 - pb[1] / pb[2] * f);
    ctx.stroke();
}

function drawGrid() {
    const n = 70;
    for (const major of [false, true]) {
        for (let i = -n; i <= n; i++) {
            if ((i % 5 === 0) !== major) continue;
            const color = major ? "rgba(108, 112, 118, 0.7)" : "rgba(128, 146, 166, 0.3)";
            segment([i, -n, 0], [i, n, 0], color, 1);
            segment([-n, i, 0], [n, i, 0], color, 1);
        }
    }
    segment([0, 0, 0], [n, 0, 0], "#984444", 1.5);
    segment([0, 0, 0], [0, n, 0], "#3f9640", 1.5);
}

// The model is a turned body. A section is (t, s): t runs along the axis from
// the mouth to the back, s is the radius relative to the mouth.
const U = [0.534, -0.845, 0];
const V = [0.591, 0.373, -0.715];
const N = [0.604, 0.382, 0.699];
const R = 299;
const light = unit([-0.5, -0.45, 0.74]);

function at(t, s, phi) {
    const c = Math.cos(phi) * s * R, d = Math.sin(phi) * s * R;
    return [641 - 380 * t + c * U[0] + d * V[0], 532 - 237 * t + c * U[1] + d * V[1]];
}

function disc(t, s, from = 0, to = Math.PI * 2) {
    ctx.beginPath();
    for (let i = 0; i <= 120; i++) {
        const p = at(t, s, from + (to - from) * i / 120);
        ctx.lineTo(p[0], p[1]);
    }
}

const gray = v => {
    v = Math.round(Math.max(0, Math.min(255, v)));
    return `rgb(${v},${v},${v})`;
};

function bead(t0, s0, t1, s1, h) {
    const out = [];
    for (let i = 0; i <= 8; i++) {
        const k = i / 8;
        out.push([t0 + (t1 - t0) * k, s0 + (s1 - s0) * k + h * Math.sin(Math.PI * k)]);
    }
    return out;
}

function turned(profile) {
    const steps = 180;
    for (let i = 0; i + 1 < profile.length; i++) {
        const [t0, s0] = profile[i], [t1, s1] = profile[i + 1];
        const dz = (t0 - t1) * 626, dr = (s1 - s0) * R;
        for (let j = 0; j < steps; j++) {
            const a = j / steps * Math.PI * 2, b = (j + 1.3) / steps * Math.PI * 2;
            const c = Math.cos(a), d = Math.sin(a);
            const n = unit([0, 1, 2].map(k => (c * U[k] + d * V[k]) * dz - N[k] * dr));
            if (n[2] <= 0) continue;
            const lit = Math.pow(Math.max(0, dot(n, light)), 0.75);
            ctx.fillStyle = ctx.strokeStyle = gray(35 + 213 * lit);
            ctx.lineWidth = 1;
            ctx.beginPath();
            for (const [t, s, p] of [[t0, s0, a], [t0, s0, b], [t1, s1, b], [t1, s1, a]]) {
                const q = at(t, s, p);
                ctx.lineTo(q[0], q[1]);
            }
            ctx.closePath();
            ctx.fill();
            ctx.stroke();
        }
    }
}

function edge(t, s, color, width, from = 205, to = 350) {
    disc(t, s, from * Math.PI / 180, to * Math.PI / 180);
    ctx.strokeStyle = color;
    ctx.lineWidth = width;
    ctx.stroke();
}

function drawModel() {
    const deg = Math.PI / 180;

    // back flange and stem
    turned([[1, 0.9], [1, 0.917], [0.945, 0.922], [0.935, 0.912],
        ...bead(0.935, 0.9, 0.899, 0.858, 0.014)]);
    edge(0.935, 0.905, "#aaa", 2);
    turned([[0.899, 0.858], [0.885, 0.835], [0.87, 0.812], [0.855, 0.79],
        ...bead(0.85, 0.778, 0.8125, 0.715, 0.018)]);
    edge(0.899, 0.858, "#000", 3);
    turned([[0.8125, 0.715], [0.79, 0.692], [0.77, 0.672], [0.744, 0.655], [0.7, 0.65], [0.64, 0.68], [0.6, 0.78]]);
    edge(0.8125, 0.715, "#000", 3);
    edge(0.744, 0.655, "#aaa", 2);

    // middle disc
    turned([...bead(0.6, 0.86, 0.565, 0.9, 0.015), [0.56, 0.92], [0.515, 0.945]]);
    disc(0.515, 0.945);
    ctx.fillStyle = "#646464";
    ctx.fill();
    for (let i = 0; i < 10; i++) {
        disc(0.5, 0.65 - i * 0.007);
        ctx.fillStyle = "rgba(40, 40, 40, 0.06)";
        ctx.fill();
    }

    // horn with its beads
    turned([[0.5, 0.57], [0.46, 0.62], [0.42, 0.67], ...bead(0.41, 0.69, 0.35, 0.765, 0.013)]);
    turned([...bead(0.335, 0.765, 0.27, 0.84, 0.014)]);
    edge(0.27, 0.835, "#666", 4);
    turned([...bead(0.25, 0.845, 0.19, 0.9, 0.015)]);
    edge(0.185, 0.895, "#222", 6);
    turned([[0.17, 0.9], [0.135, 0.94]]);
    turned([[0.13, 0.975], [0.12, 0.985], [0.06, 1], [0, 1.012]]);

    // inside of the mouth
    disc(0, 1.012);
    ctx.fillStyle = "#b4b4b4";
    ctx.fill();
    ctx.save();
    disc(0, 0.998);
    ctx.clip();
    const lit = ctx.createConicGradient(-40 * deg, 450, 413);
    const litStops = [[0, 20], [17, 60], [28, 110], [40, 175], [55, 225], [74, 250], [88, 248], [100, 220], [112, 175], [124, 95], [138, 20], [360, 20]];
    litStops.forEach(([a, v]) => lit.addColorStop(a / 360, gray(v)));
    ctx.fillStyle = lit;
    ctx.fillRect(380, 230, 520, 600);

    const dark = ctx.createConicGradient(-40 * deg, 440, 400);
    const darkStops = [[0, 0], [16, 0], [36, 36], [54, 62], [75, 76], [95, 68], [112, 40], [132, 5], [180, 0], [360, 0]];
    darkStops.forEach(([a, v]) => dark.addColorStop(a / 360, gray(v)));
    ctx.fillStyle = dark;
    ctx.filter = "blur(1.5px)";
    ctx.beginPath();
    ctx.moveTo(800, 262);
    ctx.bezierCurveTo(770, 330, 730, 400, 655, 490);
    ctx.bezierCurveTo(590, 570, 530, 650, 440, 715);
    ctx.lineTo(300, 760);
    ctx.lineTo(300, 200);
    ctx.lineTo(800, 200);
    ctx.fill();
    ctx.filter = "none";

    // throat
    ctx.strokeStyle = "#222";
    ctx.lineWidth = 4;
    ctx.beginPath();
    ctx.ellipse(465, 418, 28, 38, 32 * deg, -100 * deg, 100 * deg);
    ctx.stroke();
    ctx.restore();

    // soft lip
    edge(0, 1.005, "rgba(130, 130, 130, 0.55)", 4, -30, 200);

    // seam
    ctx.strokeStyle = "#000";
    ctx.lineWidth = 3;
    for (const line of [
        [[43, 358], [60, 371], [84, 375], [130, 380], [138, 388], [156, 391], [166, 386], [196, 392], [203, 403]],
        [[202, 454], [214, 454]],
        [[213, 485], [225, 493], [316, 467], [322, 492]],
        [[323, 520], [338, 521]],
        [[337, 555], [344, 566], [358, 566]],
        [[358, 594], [385, 615], [403, 625]]
    ]) {
        ctx.beginPath();
        line.forEach(p => ctx.lineTo(p[0], p[1]));
        ctx.stroke();
    }
}

function drawAxes(h) {
    const x = 36, y = h - 37;
    ctx.strokeStyle = ctx.fillStyle = "#5c5c5c";
    ctx.lineWidth = 1;
    ctx.beginPath();
    ctx.moveTo(x + 0.5, y - 26);
    ctx.lineTo(x + 0.5, y);
    ctx.lineTo(x + 20, y - 9);
    ctx.moveTo(x, y);
    ctx.lineTo(x - 21, y - 9);
    ctx.stroke();
    ctx.font = "12px 'DejaVu Sans', sans-serif";
    ctx.fillText("z", x + 3, y - 24);
    ctx.fillText("x", x + 22, y - 7);
    ctx.fillText("y", x - 20, y - 7);
}

function draw() {
    canvas.width = viewport.clientWidth;
    canvas.height = viewport.clientHeight;
    drawGrid();
    ctx.save();
    const k = canvas.height / 459;
    ctx.translate(canvas.width / 2, canvas.height / 2);
    ctx.scale(k / 3, k / 3);
    ctx.translate(-402, -478);
    drawModel();
    ctx.restore();
    drawAxes(canvas.height);
}

window.addEventListener("resize", draw);
draw();
```
